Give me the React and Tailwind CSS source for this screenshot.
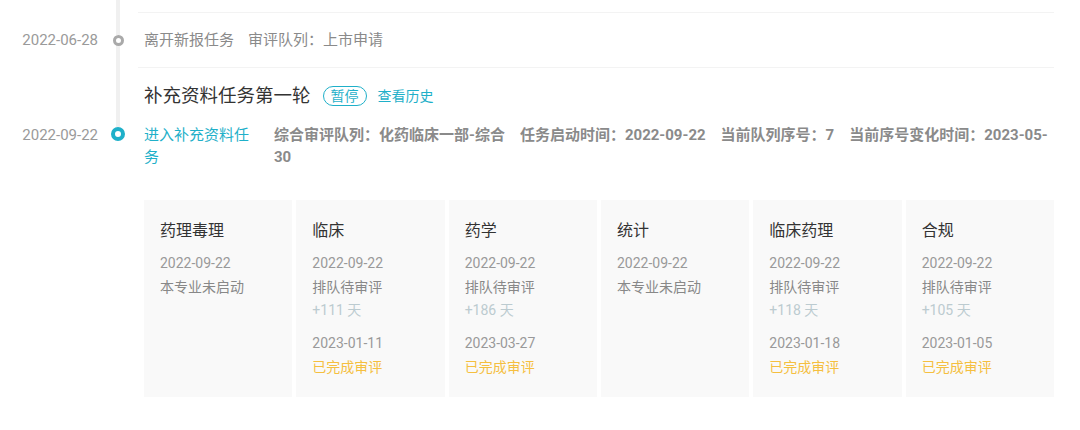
const TEAL = "text-[#1fb0c9]";

const cards = [
  { title: "药理毒理", date: "2022-09-22", status: "本专业未启动" },
  { title: "临床", date: "2022-09-22", status: "排队待审评", days: "+111 天", date2: "2023-01-11" },
  { title: "药学", date: "2022-09-22", status: "排队待审评", days: "+186 天", date2: "2023-03-27" },
  { title: "统计", date: "2022-09-22", status: "本专业未启动" },
  { title: "临床药理", date: "2022-09-22", status: "排队待审评", days: "+118 天", date2: "2023-01-18" },
  { title: "合规", date: "2022-09-22", status: "排队待审评", days: "+105 天", date2: "2023-01-05" },
];

function Line({ className = "" }) {
  return <div className={"w-[4px] bg-[#f0f0f0] " + className} />;
}

export default function App() {
  return (
    <div className="w-[1080px] h-[430px] bg-white overflow-hidden pr-[26px] font-[Roboto,'Noto_Sans_CJK_SC',sans-serif]">
      {/* Row A: tail of previous item */}
      <div className="flex h-[13px]">
        <div className="w-[98px] shrink-0" />
        <div className="w-[40px] shrink-0 flex justify-center">
          <Line />
        </div>
        <div className="flex-1 border-b border-[#f3f3f3]" />
      </div>

      {/* Row B */}
      <div className="flex h-[55px]">
        <div className="w-[98px] shrink-0 flex items-center justify-end text-[15px] text-[#9a9a9a]">
          2022-06-28
        </div>
        <div className="w-[40px] shrink-0 flex flex-col items-center">
          <Line className="flex-1" />
          <div className="w-[11px] h-[11px] rounded-full border-[3px] border-[#a9a9a9] bg-white" />
          <Line className="flex-1" />
        </div>
        <div className="flex-1 border-b border-[#f3f3f3] pl-[6px] flex items-center text-[15px] text-[#8a8a8a]">
          <span>离开新报任务</span>
          <span className="ml-[14px]">审评队列：上市申请</span>
        </div>
      </div>

      {/* Row C: title */}
      <div className="flex">
        <div className="w-[98px] shrink-0" />
        <div className="w-[40px] shrink-0 flex justify-center">
          <Line />
        </div>
        <div className="flex-1 pl-[6px] pt-[16px] pb-[16px] flex items-center">
          <span className="text-[18.5px] leading-[24px] text-[#333]">补充资料任务第一轮</span>
          <span className={"ml-[12px] h-[20px] px-[7px] rounded-full border border-[#1fb0c9] text-[14px] leading-[18px] " + TEAL}>
            暂停
          </span>
          <span className={"ml-[11px] text-[14px] " + TEAL}>查看历史</span>
        </div>
      </div>

      {/* Row D */}
      <div className="flex">
        <div className="w-[98px] shrink-0 text-right text-[15px] leading-[22px] text-[#9a9a9a]">
          2022-09-22
        </div>
        <div className="w-[40px] shrink-0 flex flex-col items-center">
          <Line className="h-[3px]" />
          <div className="w-[14px] h-[14px] rounded-full border-[4px] border-[#1fb0c9] bg-white" />
        </div>
        <div className="flex-1 pl-[6px] flex items-start">
          <div className={"w-[112px] shrink-0 text-[15px] leading-[22px] " + TEAL}>进入补充资料任务</div>
          <div className="ml-[18px] flex-1 text-[15px] leading-[22px] font-bold text-[#8a8a8a]">
            <span className="mr-[15px]">综合审评队列：化药临床一部-综合</span>
            <span className="mr-[15px]">任务启动时间：2022-09-22</span>
            <span className="mr-[15px]">当前队列序号：7</span>
            <span>当前序号变化时间：2023-05-<wbr />30</span>
          </div>
        </div>
      </div>

      {/* Cards */}
      <div className="flex mt-[32px]">
        <div className="w-[98px] shrink-0" />
        <div className="w-[40px] shrink-0" />
        <div className="flex-1 pl-[6px] grid grid-cols-6 gap-[4px]">
          {cards.map((c) => (
            <div key={c.title} className="bg-[#f9f9f9] pl-[16px] pt-[19px] pb-[18px] text-[14px] leading-[23.5px]">
              <div className="text-[16px] leading-[24px] text-[#333] mb-[9px]">{c.title}</div>
              <div className="text-[#999]">{c.date}</div>
              <div className="text-[#888]">{c.status}</div>
              {c.days && <div className="text-[#bccbd0]">{c.days}</div>}
              {c.date2 && (
                <>
                  <div className="mt-[9.5px] text-[#999]">{c.date2}</div>
                  <div className="text-[#f5bf3f]">已完成审评</div>
                </>
              )}
            </div>
          ))}
        </div>
      </div>
    </div>
  );
}
